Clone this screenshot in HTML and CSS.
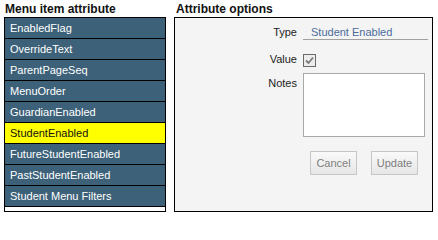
FILE: index.html
```html
<!DOCTYPE html>
<html>
<head>
<meta charset="utf-8">
<link rel="stylesheet" href="styles.css">
</head>
<body>
<div class="page">
  <div class="col col-left">
    <div class="title">Menu item attribute</div>
    <div class="list">
      <div class="item">EnabledFlag</div>
      <div class="item">OverrideText</div>
      <div class="item">ParentPageSeq</div>
      <div class="item">MenuOrder</div>
      <div class="item">GuardianEnabled</div>
      <div class="item selected">StudentEnabled</div>
      <div class="item">FutureStudentEnabled</div>
      <div class="item">PastStudentEnabled</div>
      <div class="item">Student Menu Filters</div>
    </div>
  </div>
  <div class="col col-right">
    <div class="title title-right">Attribute options</div>
    <div class="panel">
      <div class="frow row-type">
        <div class="flabel">Type</div>
        <div class="field">Student Enabled</div>
      </div>
      <div class="frow row-value">
        <div class="flabel label-value">Value</div>
        <span class="check"><svg width="11" height="11" viewBox="0 0 11 11"><path d="M2 5.5 L4.5 8 L9 2.5" fill="none" stroke="#7a7a7a" stroke-width="1.8"/></svg></span>
      </div>
      <div class="frow row-notes">
        <div class="flabel label-notes">Notes</div>
        <textarea class="notes"></textarea>
      </div>
      <div class="buttons">
        <button class="btn">Cancel</button>
        <button class="btn">Update</button>
      </div>
    </div>
  </div>
</div>
</body>
</html>
```
FILE: styles.css
```css
html, body {
  margin: 0;
  padding: 0;
  background: #fff;
}
body {
  font-family: "Liberation Sans", Arial, sans-serif;
  font-size: 11px;
  color: #222;
}
.page {
  display: flex;
  gap: 8px;
  padding-left: 4px;
}
.col-left {
  width: 162px;
}
.col-right {
  width: 259px;
}
.title {
  font-size: 12px;
  font-weight: bold;
  line-height: 15px;
  padding-top: 2px;
  padding-left: 1px;
  color: #111;
}
.title-right {
  padding-left: 2px;
}
.list {
  box-sizing: border-box;
  height: 195px;
  border: 1px solid #000;
  background: #fff;
}
.item {
  height: 20px;
  line-height: 20px;
  border-bottom: 1px solid #000;
  background: #3c6178;
  color: #fff;
  padding-left: 5px;
  font-size: 11px;
  white-space: nowrap;
}
.item.selected {
  background: #ffff00;
  color: #111;
}
.panel {
  box-sizing: border-box;
  height: 195px;
  border: 1px solid #000;
  background: #f4f4f4;
  padding-top: 8px;
  display: flex;
  flex-direction: column;
}
.frow {
  display: flex;
  gap: 6px;
  align-items: flex-start;
}
.flabel {
  width: 122px;
  text-align: right;
  line-height: 13px;
  color: #222;
}
.field {
  box-sizing: border-box;
  width: 125px;
  height: 14px;
  line-height: 13px;
  border-bottom: 1px solid #a0a0a0;
  padding-left: 8px;
  color: #4b6c9b;
}
.row-value {
  margin-top: 14px;
}
.label-value {
  margin-top: -1px;
}
.check {
  box-sizing: border-box;
  width: 13px;
  height: 13px;
  border: 1px solid #6a6a6a;
  background: #ededed;
  display: flex;
  align-items: center;
  justify-content: center;
}
.row-notes {
  margin-top: 6px;
}
.label-notes {
  margin-top: 4px;
}
.notes {
  box-sizing: border-box;
  width: 122px;
  height: 64px;
  margin: 0;
  padding: 0;
  border: 1px solid #a8a8a8;
  background: #fff;
  resize: none;
}
.buttons {
  display: flex;
  justify-content: flex-end;
  gap: 14px;
  margin-top: 14px;
  padding-right: 14px;
}
.btn {
  box-sizing: border-box;
  width: 47px;
  height: 24px;
  margin: 0;
  padding: 0;
  border: 1px solid #c6c6c6;
  background: linear-gradient(#f9f9f9, #e6e6e6);
  color: #7f7f7f;
  font-family: "Liberation Sans", Arial, sans-serif;
  font-size: 11px;
}
```
